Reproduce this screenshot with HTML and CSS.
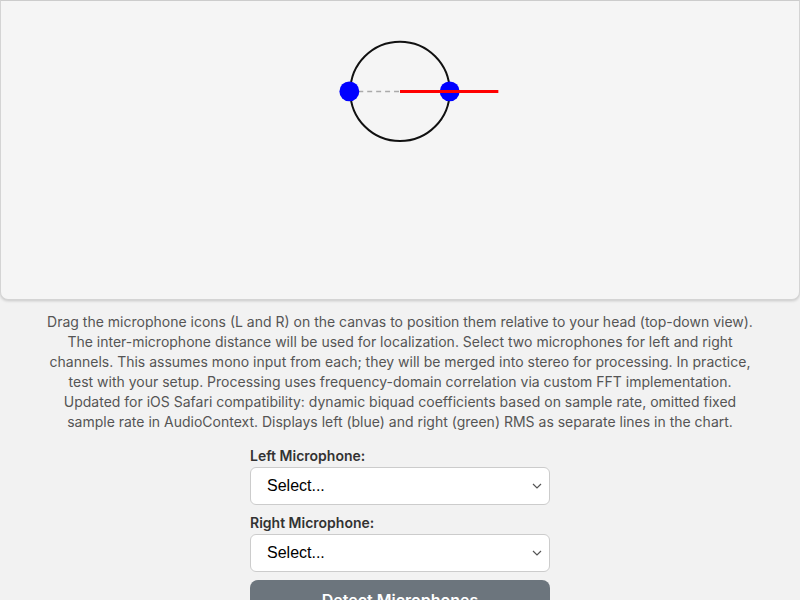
FILE: index.html
```html
<!DOCTYPE html>
<html>
<head>
<meta charset="utf-8">
<link rel="stylesheet" href="styles.css">
</head>
<body>
<div class="stage">
  <svg class="canvas" width="800" height="300" viewBox="0 0 800 300">
    <circle cx="400" cy="91" r="50" fill="none" stroke="#111" stroke-width="2"/>
    <line x1="358" y1="91" x2="400" y2="91" stroke="#aaa" stroke-width="1.5" stroke-dasharray="5 4"/>
    <circle cx="349" cy="91" r="10" fill="#00f"/>
    <circle cx="450" cy="91" r="10" fill="#00f"/>
    <line x1="400" y1="91" x2="499" y2="91" stroke="#f00" stroke-width="3"/>
  </svg>
</div>
<p class="info">Drag the microphone icons (L and R) on the canvas to position them relative to your head (top-down view). The inter-microphone distance will be used for localization. Select two microphones for left and right channels. This assumes mono input from each; they will be merged into stereo for processing. In practice, test with your setup. Processing uses frequency-domain correlation via custom FFT implementation. Updated for iOS Safari compatibility: dynamic biquad coefficients based on sample rate, omitted fixed sample rate in AudioContext. Displays left (blue) and right (green) RMS as separate lines in the chart.</p>
<div class="controls">
  <label class="lbl">Left Microphone:</label>
  <div class="sel"><span>Select...</span><svg width="10" height="6" viewBox="0 0 10 6"><path d="M1 1 L5 5 L9 1" fill="none" stroke="#555" stroke-width="1.2"/></svg></div>
  <label class="lbl">Right Microphone:</label>
  <div class="sel"><span>Select...</span><svg width="10" height="6" viewBox="0 0 10 6"><path d="M1 1 L5 5 L9 1" fill="none" stroke="#555" stroke-width="1.2"/></svg></div>
  <button class="btn">Detect Microphones</button>
</div>
</body>
</html>
```
FILE: styles.css
```css
html, body { margin: 0; padding: 0; background: #f2f2f2; }
body { font-family: Inter, "Liberation Sans", Arial, sans-serif; overflow: hidden; height: 600px; }
.stage { width: 800px; height: 300px; }
.canvas { display: block; background: #f5f5f5; border-radius: 0 0 8px 8px; border: 1px solid #d4d4d4; border-top-color: #ccc; box-sizing: border-box; box-shadow: 0 1px 3px rgba(0,0,0,0.18); }
.info { margin: 12px 40px 0; text-align: center; color: #555; font-size: 14px; line-height: 20px; }
.controls { width: 300px; margin: 16px auto 0; display: flex; flex-direction: column; }
.lbl { font-weight: 600; font-size: 14px; color: #333; line-height: 16px; margin-bottom: 3px; }
.sel { height: 38px; box-sizing: border-box; background: #fff; border: 1px solid #ccc; border-radius: 6px; display: flex; align-items: center; justify-content: space-between; padding: 0 7px 0 16px; font-family: "Liberation Sans", Arial, sans-serif; font-size: 16px; color: #000; margin-bottom: 10px; }
.btn { margin-top: -2px; height: 40px; border: none; border-radius: 8px; background: #6c757d; color: #fff; font-family: inherit; font-size: 16px; font-weight: 600; }
```
